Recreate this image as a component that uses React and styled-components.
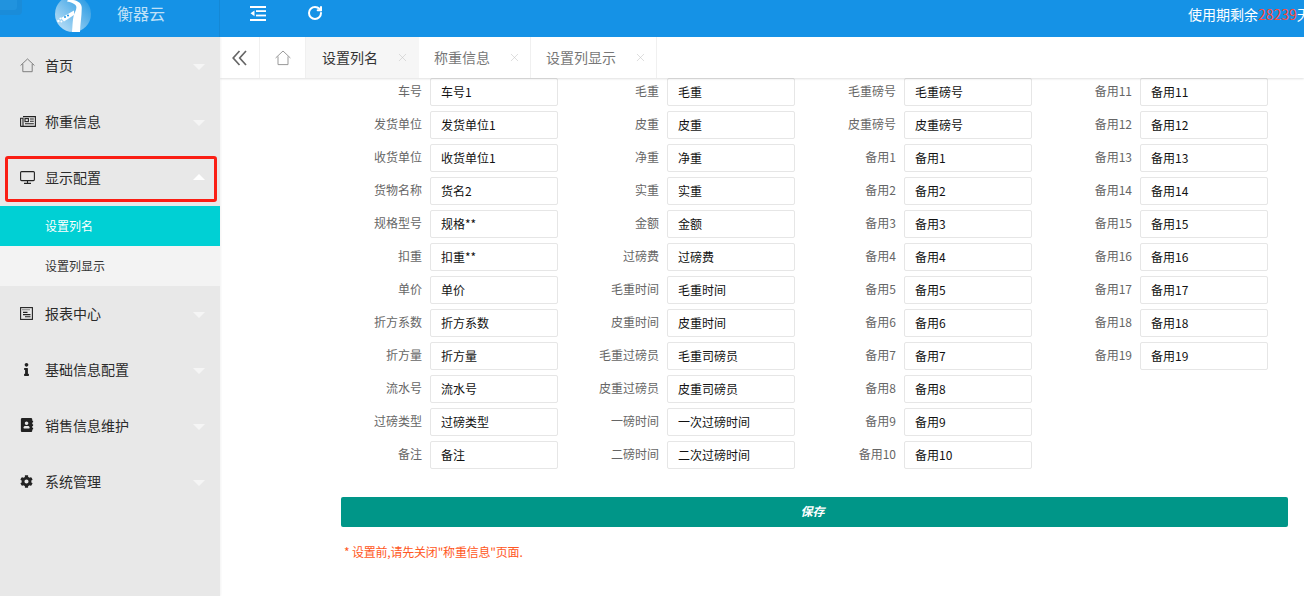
import React from "react";
import styled, { createGlobalStyle } from "styled-components";
import { FaInfo, FaCog, FaAddressBook } from "react-icons/fa";
import { RotateCw, X } from "lucide-react";

const GlobalStyle = createGlobalStyle`
  html, body {
    margin: 0;
    padding: 0;
    height: 100%;
    overflow: hidden;
    background: #fff;
    font-family: "Noto Sans CJK SC", "Liberation Sans", sans-serif;
  }
  * { box-sizing: border-box; }
`;

const Page = styled.div`
  width: 1304px;
  height: 596px;
  display: flex;
  flex-direction: column;
  overflow: hidden;
`;

const Header = styled.header`
  position: relative;
  flex: 0 0 37px;
  display: flex;
  align-items: center;
  background: #1592e6;
  overflow: hidden;
  z-index: 3;
`;

const Brand = styled.div`
  width: 220px;
  height: 37px;
  display: flex;
  align-items: flex-start;
  padding-left: 55px;
  gap: 26px;
  border-right: 1px solid #1488d6;
`;

const LogoMark = styled.svg`
  width: 36px;
  height: 36px;
  margin-top: -4px;
  flex: none;
`;

const BrandName = styled.span`
  font-size: 16px;
  line-height: 26px;
  color: #bfe0f7;
`;

const Corner = styled.span`
  position: absolute;
  left: 0;
  top: 0;
  width: 22px;
  height: 15px;
  background: #1a8cd9;
  border-radius: 0 0 4px 0;

  &::before {
    content: "";
    position: absolute;
    left: 0;
    top: 0;
    width: 17px;
    height: 10px;
    background: #2193de;
    border-radius: 0 0 3px 0;
  }
`;

const HeadTools = styled.div`
  display: flex;
  align-items: center;
  gap: 41px;
  padding-left: 30px;
  color: #fff;
  margin-top: -11px;
`;

const Expiry = styled.div`
  margin-left: auto;
  width: 116px;
  flex: none;
  white-space: nowrap;
  font-size: 14px;
  color: #fff;
  margin-top: -10px;
  overflow: hidden;
`;

const Days = styled.span`
  color: #ff4a3d;
`;

const Body = styled.div`
  flex: 1;
  display: flex;
  min-height: 0;
`;

const Sidebar = styled.aside`
  flex: 0 0 220px;
  background: #e8e8e8;
  box-shadow: 1px 0 2px rgba(0, 0, 0, 0.05);
  padding-top: 1px;
  z-index: 2;
`;

const NavItem = styled.div`
  position: relative;
  height: 56px;
  display: flex;
  align-items: center;
  padding: 0 0 2px 20px;
  font-size: 14px;
  color: #2b2b2b;
`;

const NavIcon = styled.span`
  width: 25px;
  flex: none;
  display: flex;
  align-items: center;
  color: #222;
`;

const Caret = styled.span`
  position: absolute;
  right: 15px;
  top: ${(p) => (p.$up ? "24px" : "26px")};
  width: 0;
  height: 0;
  border-left: 6px solid transparent;
  border-right: 6px solid transparent;
  ${(p) => (p.$up ? "border-bottom: 6px solid #fff;" : "border-top: 6px solid #f5f5f5;")}
`;

const Highlight = styled.span`
  position: absolute;
  left: 5px;
  top: 6px;
  width: 212px;
  height: 46px;
  border: 3px solid #fa1e14;
  border-radius: 3px;
  pointer-events: none;
`;

const SubItem = styled.div`
  height: 40px;
  display: flex;
  align-items: center;
  padding: 0 0 2px 45px;
  font-size: 12px;
  color: ${(p) => (p.$active ? "#fff" : "#333")};
  background: ${(p) => (p.$active ? "#00d0d4" : "#f3f3f3")};
`;

const Main = styled.main`
  flex: 1;
  display: flex;
  flex-direction: column;
  min-width: 0;
`;

const TabBar = styled.nav`
  flex: 0 0 41px;
  display: flex;
  background: #fff;
  box-shadow: 0 1px 2px rgba(0, 0, 0, 0.12);
  position: relative;
  z-index: 1;
`;

const TabIconBtn = styled.div`
  width: ${(p) => p.$w}px;
  display: flex;
  align-items: center;
  justify-content: center;
  border-right: 1px solid #f0f0f0;
`;

const Tab = styled.div`
  width: ${(p) => p.$w}px;
  display: flex;
  align-items: center;
  justify-content: space-between;
  padding: 0 9px 2px ${(p) => (p.$active ? "16px" : "15px")};
  font-size: 14px;
  color: ${(p) => (p.$active ? "#333" : "#777")};
  background: ${(p) => (p.$active ? "#f6f6f6" : "#fff")};
  border-right: 1px solid ${(p) => (p.$active ? "#f6f6f6" : "#f0f0f0")};
`;

const TabClose = styled(X)`
  color: #c2c2c2;
  margin-top: 2px;
`;

const Content = styled.section`
  padding-left: 102px;
`;

const FieldGrid = styled.div`
  display: grid;
  grid-auto-flow: column;
  grid-template-rows: repeat(12, 28px);
  grid-template-columns: 237px 237px 236px 236px;
  row-gap: 5px;
`;

const Field = styled.div`
  display: flex;
  align-items: center;
  gap: 8px;
`;

const Label = styled.label`
  width: 100px;
  text-align: right;
  font-size: 12px;
  line-height: 26px;
  margin-top: -2px;
  color: #666;
`;

const Input = styled.input`
  width: 128px;
  height: 28px;
  padding: 0 10px 1px;
  border: 1px solid #e6e6e6;
  border-radius: 2px;
  background: #fff;
  font: inherit;
  font-size: 12px;
  color: #111;
  outline: none;
`;

const SaveButton = styled.button`
  display: block;
  width: 947px;
  height: 30px;
  margin: 28px 0 0 19px;
  padding: 0 4px 3px 0;
  border: 0;
  border-radius: 2px;
  background: #009688;
  color: #fff;
  font: inherit;
  font-size: 12px;
  font-weight: 700;
  font-style: italic;
`;

const Note = styled.p`
  margin: 16px 0 0 22px;
  font-size: 12px;
  line-height: 18px;
  letter-spacing: -0.2px;
  color: #ff5722;
`;

const HomeIcon = ({ size = 16, color = "#999" }) => (
  <svg width={size} height={size} viewBox="0 0 16 16" fill="none" stroke={color} strokeWidth="1">
    <path d="M0.6 8 8 1 15.4 8" />
    <path d="M3 6.4V14.6H13V6.4" />
  </svg>
);

const DoubleLeft = () => (
  <svg width="15" height="16" viewBox="0 0 15 16" fill="none" stroke="#666" strokeWidth="1.7">
    <path d="M7.5 1 1.2 8 7.5 15" />
    <path d="M14 1 7.7 8 14 15" />
  </svg>
);

const OutdentIcon = () => (
  <svg width="16" height="15" viewBox="0 0 16 15" fill="#fff">
    <rect x="0" y="0" width="16" height="2" />
    <rect x="6" y="4.2" width="10" height="1.8" />
    <rect x="6" y="8.6" width="10" height="1.8" />
    <rect x="0" y="13" width="16" height="2" />
    <path d="M0.5 7.3 4.5 4.4V10.2Z" />
  </svg>
);

const NewsIcon = () => (
  <svg width="16" height="11" viewBox="0 0 16 11" fill="none" stroke="#222" strokeWidth="1.1">
    <path d="M3 0.6H15.4V10.4H1.2Q0.6 10.4 0.6 9.8V2.2H3V10.2" />
    <rect x="5" y="2.6" width="3.4" height="3" />
    <path d="M10 3h3.8M10 5.2h3.8M5 7.8h8.8" />
  </svg>
);

const MonitorIcon = () => (
  <svg width="15" height="13" viewBox="0 0 15 13" fill="none" stroke="#222" strokeWidth="1.1">
    <rect x="0.6" y="0.6" width="13.8" height="9" rx="1" />
    <path d="M4 12.4h7M7.5 9.6v2.8" />
  </svg>
);

const ReportIcon = () => (
  <svg width="13" height="13" viewBox="0 0 13 13" fill="none" stroke="#222" strokeWidth="1.1">
    <rect x="0.6" y="0.6" width="11.8" height="11.8" />
    <path d="M2.5 2.8h8" strokeDasharray="1 1" />
    <path d="M3 5.4h4.5M3 7.6h7.5M5 9.8h5.5" />
  </svg>
);

const Logo = () => (
  <LogoMark viewBox="0 0 36 36">
    <defs>
      <linearGradient id="logoFill" x1="0.1" y1="0.9" x2="0.9" y2="0.1">
        <stop offset="0" stopColor="#b8def6" />
        <stop offset="1" stopColor="#2b9be3" />
      </linearGradient>
    </defs>
    <circle cx="18" cy="18" r="18" fill="url(#logoFill)" />
    <path d="M13 3.6C19 3.6 26 5 26.7 11 27 18 25.2 28 25 36H17C17.6 30 17.4 25 18.6 20 19.8 15.5 23.2 11.8 20.2 8.8 18.4 7 15.6 6 12 5.4Z" fill="#fff" />
    <path d="M6 22 19 14.6 19 19 9 25.4Z" fill="#fff" />
    <circle cx="3.4" cy="25" r="1.2" fill="#fff" />
    <circle cx="6.4" cy="25.6" r="1" fill="#fff" />
    <circle cx="5.4" cy="22.6" r="1" fill="#fff" />
    <circle cx="10" cy="21" r="1" fill="#1592e6" />
    <circle cx="13" cy="19.6" r="1" fill="#1592e6" />
  </LogoMark>
);

const menus = [
  { name: "首页", icon: <HomeIcon size={15} color="#777" /> },
  { name: "称重信息", icon: <NewsIcon /> },
  { name: "显示配置", icon: <MonitorIcon />, open: true, subs: ["设置列名", "设置列显示"] },
  { name: "报表中心", icon: <ReportIcon /> },
  { name: "基础信息配置", icon: <FaInfo size={13} /> },
  { name: "销售信息维护", icon: <FaAddressBook size={14} /> },
  { name: "系统管理", icon: <FaCog size={13} /> },
];

const tabs = [
  { name: "设置列名", w: 113, active: true },
  { name: "称重信息", w: 112 },
  { name: "设置列显示", w: 126 },
];

const columns = [
  [
    ["车号", "车号1"], ["发货单位", "发货单位1"], ["收货单位", "收货单位1"], ["货物名称", "货名2"],
    ["规格型号", "规格**"], ["扣重", "扣重**"], ["单价", "单价"], ["折方系数", "折方系数"],
    ["折方量", "折方量"], ["流水号", "流水号"], ["过磅类型", "过磅类型"], ["备注", "备注"],
  ],
  [
    ["毛重", "毛重"], ["皮重", "皮重"], ["净重", "净重"], ["实重", "实重"],
    ["金额", "金额"], ["过磅费", "过磅费"], ["毛重时间", "毛重时间"], ["皮重时间", "皮重时间"],
    ["毛重过磅员", "毛重司磅员"], ["皮重过磅员", "皮重司磅员"], ["一磅时间", "一次过磅时间"], ["二磅时间", "二次过磅时间"],
  ],
  [
    ["毛重磅号", "毛重磅号"], ["皮重磅号", "皮重磅号"], ["备用1", "备用1"], ["备用2", "备用2"],
    ["备用3", "备用3"], ["备用4", "备用4"], ["备用5", "备用5"], ["备用6", "备用6"],
    ["备用7", "备用7"], ["备用8", "备用8"], ["备用9", "备用9"], ["备用10", "备用10"],
  ],
  [11, 12, 13, 14, 15, 16, 17, 18, 19].map((n) => ["备用" + n, "备用" + n]),
];

function App() {
  return (
    <Page>
      <GlobalStyle />
      <Header>
        <Corner />
        <Brand>
          <Logo />
          <BrandName>衡器云</BrandName>
        </Brand>
        <HeadTools>
          <OutdentIcon />
          <RotateCw size={16} strokeWidth={3} />
        </HeadTools>
        <Expiry>
          使用期剩余<Days>28239</Days>天
        </Expiry>
      </Header>
      <Body>
        <Sidebar>
          {menus.map((m) => (
            <React.Fragment key={m.name}>
              <NavItem>
                <NavIcon>{m.icon}</NavIcon>
                {m.name}
                <Caret $up={m.open} />
                {m.open && <Highlight />}
              </NavItem>
              {m.subs &&
                m.subs.map((s, i) => (
                  <SubItem key={s} $active={i === 0}>
                    {s}
                  </SubItem>
                ))}
            </React.Fragment>
          ))}
        </Sidebar>
        <Main>
          <TabBar>
            <TabIconBtn $w={40}>
              <DoubleLeft />
            </TabIconBtn>
            <TabIconBtn $w={46}>
              <HomeIcon />
            </TabIconBtn>
            {tabs.map((t) => (
              <Tab key={t.name} $w={t.w} $active={t.active}>
                {t.name}
                <TabClose size={13} strokeWidth={1} />
              </Tab>
            ))}
          </TabBar>
          <Content>
            <FieldGrid>
              {columns.flat().map(([label, value], i) => (
                <Field key={i}>
                  <Label>{label}</Label>
                  <Input defaultValue={value} />
                </Field>
              ))}
            </FieldGrid>
            <SaveButton>保存</SaveButton>
            <Note>* 设置前,请先关闭"称重信息"页面.</Note>
          </Content>
        </Main>
      </Body>
    </Page>
  );
}

export default App;
